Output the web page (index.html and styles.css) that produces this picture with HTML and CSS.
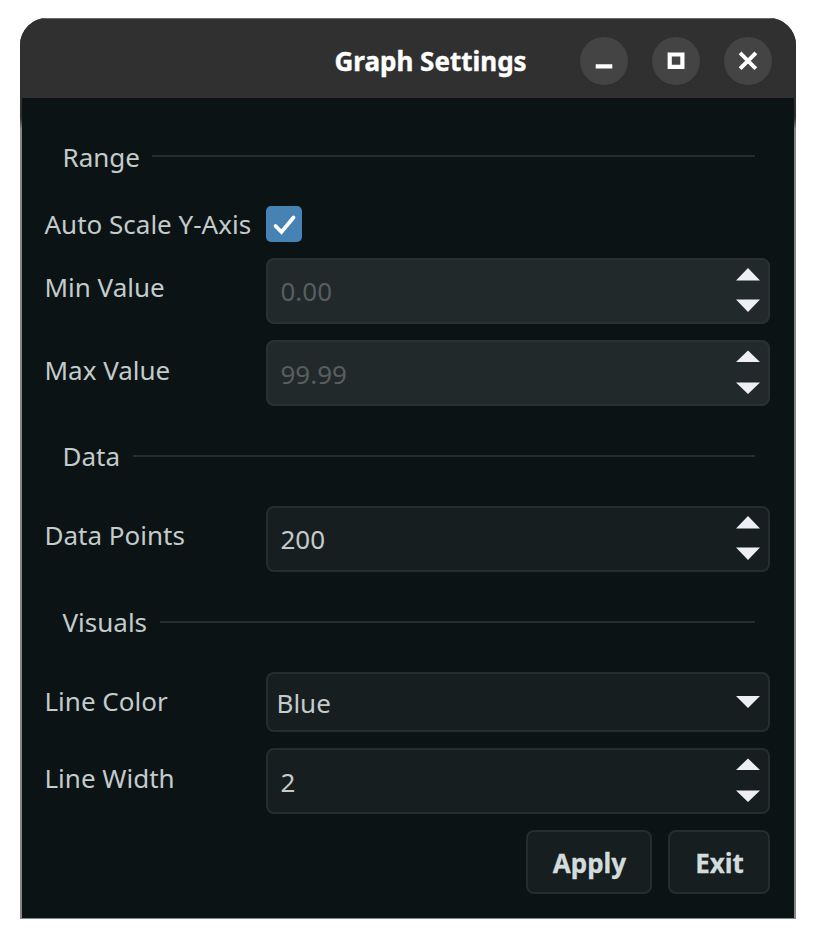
FILE: index.html
```
<!DOCTYPE html>
<html lang="en">
<head>
<meta charset="utf-8">
<title>Graph Settings</title>
<link rel="stylesheet" href="styles.css">
</head>
<body>
<main class="window">
  <header class="titlebar">
    <h1 class="title">Graph Settings</h1>
    <div class="controls">
      <button class="control" aria-label="Minimize"><svg width="48" height="48"><path d="M15.7 29.300h16.600" stroke="#fff" stroke-width="4.2"/></svg></button>
      <button class="control" aria-label="Maximize"><svg width="48" height="48"><path d="M17.700 17.500h12.700v12.300h-12.700z" fill="none" stroke="#fff" stroke-width="4.2"/></svg></button>
      <button class="control" aria-label="Close"><svg width="48" height="48"><path d="M17.500 17.300l13 13M30.500 17.300l-13 13" stroke="#fff" stroke-width="3.9" stroke-linecap="square"/></svg></button>
    </div>
  </header>
  <form class="content">
    <h2 class="group">Range</h2>
    <div class="row row-check">
      <span class="label">Auto Scale Y-Axis</span>
      <span class="checkbox"><svg width="36" height="36"><path d="M9.500 20l6 6L27.500 11.500" fill="none" stroke="#fff" stroke-width="3.8" stroke-linecap="round" stroke-linejoin="miter"/></svg></span>
    </div>
    <div class="row">
      <span class="label">Min Value</span>
      <div class="field disabled"><span>0.00</span><svg class="arrows" width="24" height="62"><path d="M0 20.500L12 8l12 12.500zM0 39.500h24L12 52z"/></svg></div>
    </div>
    <div class="row low">
      <span class="label">Max Value</span>
      <div class="field disabled"><span>99.99</span><svg class="arrows" width="24" height="62"><path d="M0 20L12 8.500L24 20zM0 40.500h24L12 52z"/></svg></div>
    </div>
    <h2 class="group">Data</h2>
    <div class="row">
      <span class="label">Data Points</span>
      <div class="field"><span>200</span><svg class="arrows" width="24" height="62"><path d="M0 20.500L12 8l12 12.500zM0 39.500h24L12 52z"/></svg></div>
    </div>
    <h2 class="group">Visuals</h2>
    <div class="row row-select">
      <span class="label">Line Color</span>
      <div class="field select"><span>Blue</span><svg class="arrows" width="24" height="56"><path d="M0 22h24L12 34z"/></svg></div>
    </div>
    <div class="row low">
      <span class="label">Line Width</span>
      <div class="field"><span>2</span><svg class="arrows" width="24" height="62"><path d="M0 20L12 8.500L24 20zM0 40.500h24L12 52z"/></svg></div>
    </div>
    <footer class="actions">
      <button class="button apply" type="button">Apply</button>
      <button class="button exit" type="button">Exit</button>
    </footer>
  </form>
</main>
</body>
</html>
```
FILE: styles.css
```
* { box-sizing: border-box; }
body {
  margin: 0;
  padding: 18px 20px 0;
  background: #fff;
  font: 26px/36px "Noto Sans", sans-serif;
  color: #c3cbcb;
}
h1, h2 { margin: 0; font: inherit; }
button { padding: 0; border: 0; font: inherit; color: inherit; }
svg { display: block; }
.window {
  width: 776px;
  height: 901px;
  border-radius: 27px 27px 0 0;
  background: linear-gradient(#303030 100px, #858686 111px);
  overflow: hidden;
  padding: 0 2px 1px;
}
.titlebar {
  display: flex;
  align-items: center;
  height: 80px;
  margin: 0 -2px;
  padding: 4px 24px 0 0;
  background: #303030;
  border-top: 1px solid #6b6b6b;
}
.title {
  width: 560px;
  padding-left: 314.5px;
  white-space: nowrap;
  font-weight: 700;
  color: #fff;
  -webkit-text-stroke: 0.4px #fff;
}
.controls { display: flex; gap: 24px; }
.control {
  width: 48px;
  height: 48px;
  border-radius: 50%;
  background: #444;
}
.content {
  height: 820px;
  padding: 40px 24px 0 22px;
  background: #0b1315;
}
.group {
  display: flex;
  gap: 12.5px;
  height: 36px;
  margin: 32px 15px 32px 18.5px;
}
.group:first-child {
  margin-top: 1px;
  margin-bottom: 31px;
}
.group::after {
  content: "";
  flex: 1;
  height: 2px;
  margin-top: 17px;
  background: #262d2f;
}
.group:first-child::after { margin-top: 16px; }
.row {
  display: grid;
  grid-template-columns: 222px 504px;
  height: 66px;
  margin-bottom: 16px;
}
.label { padding: 11px 0 0 0.5px; }
.low .label { padding-top: 12px; }
.row-check { height: 36px; }
.row-check .label { padding-top: 0; }
.row-select { height: 60px; }
.checkbox {
  width: 36px;
  height: 36px;
  border-radius: 5px;
  background: #4682b4;
}
.field {
  display: flex;
  justify-content: space-between;
  align-items: center;
  padding: 0 8px 0 12.5px;
  border: 2px solid #262d2f;
  border-radius: 8px;
  background: #171e20;
}
.field.select { padding-left: 8.5px; }
.select > span { padding-top: 2px; }
.disabled {
  color: #575e5f;
  background: #22292b;
  border-color: #2a3133;
}
.low .field > span { padding-top: 2px; }
.arrows { fill: #eeeef6; }
.actions {
  display: flex;
  justify-content: flex-end;
  gap: 16px;
}
.button {
  height: 64px;
  padding: 1px 0 0 1px;
  border: 2px solid #262d2f;
  border-radius: 8px;
  background: #171e20;
  color: #d3dcdc;
  font-weight: 700;
  -webkit-text-stroke: 0.3px #d3dcdc;
}
.apply { width: 126px; }
.exit { width: 102px; }
```
